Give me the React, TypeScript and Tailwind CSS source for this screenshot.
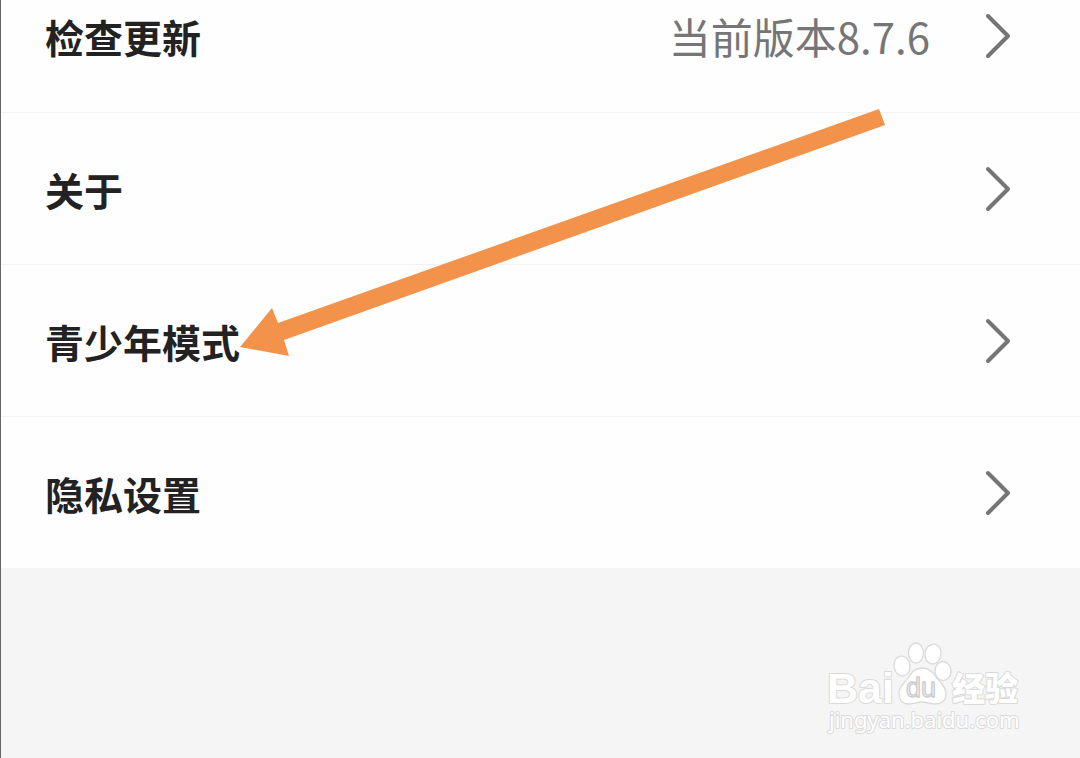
interface RowType {
  label: string
  value?: string
}

const rows: RowType[] = [
  { label: "检查更新", value: "当前版本8.7.6" },
  { label: "关于" },
  { label: "青少年模式" },
  { label: "隐私设置" },
]

function Chevron() {
  return (
    <svg className="w-7 h-12" viewBox="0 0 28 48" fill="none" stroke="#757575" strokeWidth="4" strokeLinecap="round" strokeLinejoin="round" aria-hidden="true">
      <path d="M4 4 L24 24 L4 44" />
    </svg>
  )
}

function Row({ label, value }: RowType) {
  return (
    <button type="button" className="w-full h-38 pl-11 pr-17 flex items-center text-left border-t border-[#f2f2f2] first:border-t-0">
      <span className="flex-1 text-[39px] leading-[56px] font-bold text-[#222222]">{label}</span>
      {value && <span className="mr-[54px] text-[42px] leading-[56px] text-[#767676]">{value}</span>}
      <Chevron />
    </button>
  )
}

// seta que aponta para o modo adolescente
function Arrow() {
  return (
    <svg className="absolute left-[239px] top-[108px] w-[646px] h-[249px] pointer-events-none" viewBox="0 0 646 249" aria-hidden="true">
      <path d="M0 239 L32 200 L38 215 L639 1 L645 17 L44 232 L49 248 Z" fill="#f3934b" />
    </svg>
  )
}

function Watermark() {
  return (
    <svg className="absolute right-14 bottom-[18px] w-[200px] h-[100px] pointer-events-none" viewBox="0 0 200 100" fill="#ffffff" stroke="#dadada" strokeWidth="2" strokeLinejoin="round">
      <g style={{ paintOrder: "stroke" }}>
        <text x="3" y="63" fontSize="43" fontWeight="700" fontFamily="Liberation Sans, sans-serif">Bai</text>
        <text x="128" y="61" fontSize="33" fontWeight="900" fontFamily="Noto Sans CJK SC, sans-serif">经验</text>
        <text x="5" y="88" fontSize="22" fontFamily="Noto Sans, sans-serif">jingyan.baidu.com</text>
      </g>
      <g strokeWidth="1.3">
        <ellipse cx="78" cy="26" rx="8" ry="10" transform="rotate(-8 78 26)" />
        <ellipse cx="92" cy="13" rx="7.5" ry="10" />
        <ellipse cx="109" cy="14" rx="8" ry="10" transform="rotate(10 109 14)" />
        <ellipse cx="119" cy="31" rx="8" ry="9.5" transform="rotate(-5 119 31)" />
        <path d="M98 28 C105 28 109 32 112 37 C116 42 122 46 122 54 C122 61 117 64 111 64 C106 64 103 62 98 62 C93 62 91 64 85 64 C78 64 75 59 75 53 C75 46 81 43 84 38 C88 32 91 28 98 28 Z" />
        <text x="82" y="57" fontSize="27" fontFamily="Liberation Sans, sans-serif" fill="#f2f2f2" stroke="#cccccc">du</text>
      </g>
    </svg>
  )
}

export default function App() {
  return (
    <main className="relative flow-root min-h-screen overflow-hidden border-l border-[#666666] bg-[#f5f5f5] font-['Noto_Sans_CJK_SC',sans-serif]">
      {/* a primeira linha fica parcialmente acima do topo */}
      <section className="-mt-10 bg-[#fefefe]">
        {rows.map((row) => (
          <Row key={row.label} {...row} />
        ))}
      </section>
      <Arrow />
      <Watermark />
    </main>
  )
}
